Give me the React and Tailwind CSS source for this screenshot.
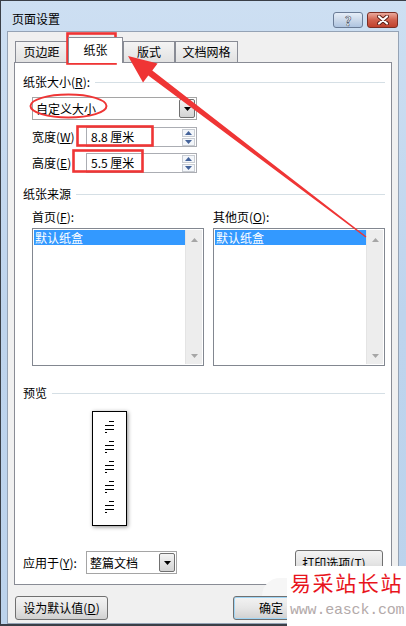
import React from 'react';

const Tri = ({ up, className = '' }) => (
  <svg width="7" height="4" viewBox="0 0 7 4" className={className}>
    <path d={up ? 'M0 4h7L3.5 0z' : 'M0 0h7L3.5 4z'} fill="currentColor" />
  </svg>
);

// section header with the thin rule after it
const Group = ({ children, className = '' }) => (
  <div className={`flex h-[16px] items-center gap-[5px] pr-[6px] ${className}`}>
    <span className="leading-[16px]">{children}</span>
    <div className="h-px flex-1 bg-[#d5dfe5]" />
  </div>
);

const Combo = ({ text, className = '' }) => (
  <div className={`flex h-[23px] items-stretch border border-[#a5a5a5] bg-white p-px ${className}`}>
    <span className="flex-1 pl-[2px] leading-[19px]">{text}</span>
    <div className="flex w-[16px] items-center justify-center rounded-[2px] border border-[#707070] bg-gradient-to-b from-[#f4f4f4] to-[#d3d3d3] text-black">
      <Tri />
    </div>
  </div>
);

const Spin = ({ value }) => (
  <div className="flex h-[20px] w-[111px] items-center border border-[#abadb3] bg-white pr-px">
    <span className="flex-1 pl-[4px] leading-[18px]">{value}</span>
    <div className="flex flex-col gap-px">
      <div className="flex h-[8px] w-[13px] items-center justify-center border border-[#c8ccd2] bg-[#f3f6fa] text-[#44639a]">
        <Tri up />
      </div>
      <div className="flex h-[8px] w-[13px] items-center justify-center border border-[#c8ccd2] bg-[#f3f6fa] text-[#44639a]">
        <Tri />
      </div>
    </div>
  </div>
);

const ListBox = () => (
  <div className="flex h-[138px] w-[172px] border border-[#828790] bg-white p-px">
    <div className="flex-1">
      <div className="h-[15px] bg-[#3399ff] pl-px leading-[15px] text-white">默认纸盒</div>
    </div>
    <div className="flex w-[17px] flex-col items-center justify-between border-l border-[#e4e4e4] bg-[#ededed] pb-[6px] pt-[8px] text-[#a6a6a6]">
      <Tri up />
      <Tri />
    </div>
  </div>
);

const Button = ({ children, className = '' }) => (
  <div
    className={`flex h-[24px] items-center justify-center rounded-[3px] border border-[#707070] bg-gradient-to-b from-[#f3f3f3] via-[#e6e6e6] to-[#d0d0d0] ${className}`}
  >
    {children}
  </div>
);

const U = ({ children }) => <span className="underline underline-offset-[1px]">{children}</span>;

// preview page, little text lines
const PreviewPage = () => (
  <div className="ml-[69px] mt-[10px] h-[115px] w-[35px] border border-black bg-white shadow-[1px_1px_4px_rgba(0,0,0,0.45)]">
    <svg width="33" height="113" viewBox="0 0 33 113">
      {[0, 1, 2, 3, 4].map((g) => {
        const y = 9.5 + g * 20;
        return (
          <g key={g} stroke="#000" strokeWidth="1">
            <line x1="16" y1={y} x2="21" y2={y} />
            <line x1="12" y1={y + 4} x2="21" y2={y + 4} />
            <line x1="12" y1={y + 8} x2="21" y2={y + 8} />
            <line x1="12" y1={y + 11} x2="14" y2={y + 11} />
          </g>
        );
      })}
    </svg>
  </div>
);

const Tab = ({ children, active, className = '' }) =>
  active ? (
    <div className={`relative z-10 -mb-px flex h-[26px] items-center justify-center border border-b-0 border-[#898c95] bg-white pb-[2px] ${className}`}>
      {children}
    </div>
  ) : (
    <div className={`flex h-[21px] items-center justify-center border border-b-0 border-[#898c95] bg-gradient-to-b from-[#f4f4f4] to-[#e2e2e2] ${className}`}>
      {children}
    </div>
  );

export default function App() {
  return (
    <div className='relative h-[626px] w-[406px] overflow-hidden font-["Noto_Sans_CJK_SC","Liberation_Sans",sans-serif] text-[12px] text-black'>
      <div className="flex h-full w-full flex-col border-b-[2px] border-l border-t border-[#3a3f47] bg-gradient-to-b from-[#cddff2] via-[#bed4ed] to-[#bcd3ec]">
        {/* title bar */}
        <div className="flex h-[30px] items-start justify-between pl-[11px] pr-[8px]">
          <span className="mt-[11px] leading-[14px]">页面设置</span>
          <div className="mt-[11px] flex gap-[4px]">
            <div className="flex h-[16px] w-[30px] items-center justify-center rounded-[3px] border border-[#6a7c96] bg-gradient-to-b from-[#e6eef8] via-[#cbd9ea] to-[#aec4e0]">
              <span className="text-[13px] font-bold leading-none text-white [-webkit-text-stroke:0.6px_#3d4a5e]">?</span>
            </div>
            <div className="flex h-[16px] w-[31px] items-center justify-center rounded-[3px] border border-[#7a2e24] bg-gradient-to-b from-[#e9a99c] via-[#d0604d] to-[#c0412d]">
              <svg width="12" height="10" viewBox="0 0 12 10">
                <path d="M2 1.5l8 7M10 1.5l-8 7" stroke="#5a1d15" strokeWidth="4" strokeLinecap="round" />
                <path d="M2 1.5l8 7M10 1.5l-8 7" stroke="#fff" strokeWidth="2.2" strokeLinecap="round" />
              </svg>
            </div>
          </div>
        </div>

        {/* client area */}
        <div className="ml-[6px] mr-[7px] flex flex-1 flex-col border border-[#95a3b5] bg-[#f0f0f0] px-[6px] pb-[3px] pt-[5px]">
          <div className="flex h-[25px] items-end pl-px">
            <Tab className="w-[53px]">页边距</Tab>
            <Tab active className="w-[55px]">纸张</Tab>
            <Tab className="w-[52px]">版式</Tab>
            <Tab className="w-[63px]">文档网格</Tab>
          </div>

          <div className="flex h-[523px] flex-col border border-[#898c95] bg-white pl-[8px]">
            <Group className="mt-[11px]">
              纸张大小(<U>R</U>):
            </Group>
            <Combo text="自定义大小" className="ml-[9px] mt-[7px] w-[165px]" />
            <div className="ml-[9px] mt-[7px] flex items-center">
              <span className="w-[54px]">
                宽度(<U>W</U>)
              </span>
              <Spin value="8.8 厘米" />
            </div>
            <div className="ml-[9px] mt-[6px] flex items-center">
              <span className="w-[54px]">
                高度(<U>E</U>)
              </span>
              <Spin value="5.5 厘米" />
            </div>

            <Group className="mt-[13px]">纸张来源</Group>
            <div className="ml-[9px] mt-[7px] flex gap-[9px]">
              <div className="flex w-[172px] flex-col gap-[3px]">
                <span className="leading-[16px]">
                  首页(<U>F</U>):
                </span>
                <ListBox />
              </div>
              <div className="flex w-[172px] flex-col gap-[3px]">
                <span className="leading-[16px]">
                  其他页(<U>O</U>):
                </span>
                <ListBox />
              </div>
            </div>

            <Group className="mt-[19px]">预览</Group>
            <PreviewPage />

            <div className="mt-[24px] flex items-center pr-[8px]">
              <span className="w-[63px]">
                应用于(<U>Y</U>):
              </span>
              <Combo text="整篇文档" className="w-[91px]" />
              <div className="flex-1" />
              <Button className="h-[25px] w-[88px]">
                打印选项(<U>T</U>)...
              </Button>
            </div>
          </div>

          <div className="mt-[11px] flex">
            <Button className="ml-px w-[93px]">
              设为默认值(<U>D</U>)
            </Button>
            <div className="flex-1" />
            <Button className="mr-[83px] w-[76px] border-[#3c7fb1] shadow-[inset_0_0_0_1px_#9fd5f5]">确定</Button>
          </div>
        </div>
      </div>

      {/* red annotations */}
      <svg className="pointer-events-none absolute inset-0" width="406" height="626" viewBox="0 0 406 626">
        <rect x="67.5" y="33.5" width="48" height="30" fill="none" stroke="#ef3535" strokeWidth="2.6" />
        <ellipse cx="68.5" cy="106" rx="38" ry="11.5" fill="none" stroke="#ef3535" strokeWidth="2" />
        <rect x="77.5" y="126.5" width="75" height="19" fill="none" stroke="#ef3535" strokeWidth="2.6" />
        <rect x="73.5" y="150.5" width="69" height="21" fill="none" stroke="#ef3535" strokeWidth="2.6" />
        <polygon
          points="128,56 157.6,63.4 152.3,70.5 366.4,236.6 365.6,237.4 148.3,75.5 143,82.6"
          fill="#ef3535"
        />
      </svg>

      {/* watermark */}
      <div className="absolute left-[262px] top-[578px] h-[18px] w-[30px] rounded-tl-full bg-[#f6f6f6]" />
      <div className="absolute left-[287px] top-[566px] flex h-[60px] w-[119px] flex-col bg-white pl-[3px]">
        <span className="mt-[3px] text-[21px] leading-[26px] tracking-[1.6px] text-[#e8141c]">易采站长站</span>
        <span className='mt-[8px] font-["Liberation_Mono",monospace] text-[15px] leading-[16px] tracking-[-0.2px] text-[#b3aaaa]'>
          www.easck.com
        </span>
      </div>
    </div>
  );
}
